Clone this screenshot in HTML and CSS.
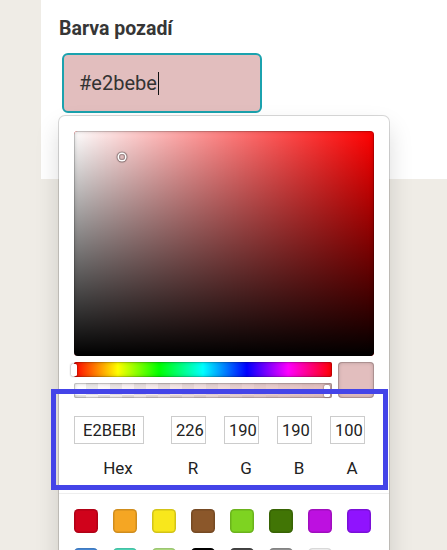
FILE: index.html
```html
<!DOCTYPE html>
<html lang="cs">
<head>
<meta charset="utf-8">
<title>Barva pozadí</title>
<link rel="stylesheet" href="styles.css">
</head>
<body>
<div class="page">
  <div class="card">
    <div class="field-label">Barva pozadí</div>
    <div class="color-field">
      <div class="color-input">#e2bebe<span class="caret"></span></div>
      <div class="picker">
        <div class="saturation">
          <div class="sat-white"></div>
          <div class="sat-black"></div>
          <div class="sat-pointer"></div>
        </div>
        <div class="controls">
          <div class="sliders">
            <div class="hue"><div class="slider-pointer hue-pointer"></div></div>
            <div class="alpha"><div class="alpha-gradient"></div><div class="slider-pointer alpha-pointer"></div></div>
          </div>
          <div class="active-color"></div>
        </div>
        <div class="fields">
          <div class="field field-hex"><input class="field-input hex-input" value="E2BEBE"><span class="field-name">Hex</span></div>
          <div class="field"><input class="field-input" value="226"><span class="field-name">R</span></div>
          <div class="field"><input class="field-input" value="190"><span class="field-name">G</span></div>
          <div class="field"><input class="field-input" value="190"><span class="field-name">B</span></div>
          <div class="field"><input class="field-input" value="100"><span class="field-name">A</span></div>
        </div>
        <div class="presets">
          <div class="swatch" style="background:#D0021B"></div>
          <div class="swatch" style="background:#F5A623"></div>
          <div class="swatch" style="background:#F8E71C"></div>
          <div class="swatch" style="background:#8B572A"></div>
          <div class="swatch" style="background:#7ED321"></div>
          <div class="swatch" style="background:#417505"></div>
          <div class="swatch" style="background:#BD10E0"></div>
          <div class="swatch" style="background:#9013FE"></div>
          <div class="swatch" style="background:#4A90E2"></div>
          <div class="swatch" style="background:#50E3C2"></div>
          <div class="swatch" style="background:#B8E986"></div>
          <div class="swatch" style="background:#000000"></div>
          <div class="swatch" style="background:#4A4A4A"></div>
          <div class="swatch" style="background:#9B9B9B"></div>
          <div class="swatch" style="background:#FFFFFF"></div>
        </div>
      </div>
    </div>
  </div>
  <div class="highlight"></div>
</div>
</body>
</html>
```
FILE: styles.css
```css
html, body {
  margin: 0;
  padding: 0;
  overflow: hidden;
  height: 100%;
}
body {
  background: #efece6;
  font-family: Roboto, "Liberation Sans", sans-serif;
  color: #333;
}
.page {
  position: relative;
  height: 550px;
}
.card {
  margin-left: 41px;
  background: #fff;
  height: 179px;
  padding: 18px 0 0 18px;
  box-sizing: border-box;
}
.field-label {
  font-size: 19.5px;
  font-weight: 700;
  color: #363636;
  line-height: 22px;
}
.color-field {
  position: relative;
  margin-top: 13px;
  margin-left: 3px;
  width: 200px;
}
.color-input {
  box-sizing: border-box;
  width: 200px;
  height: 60px;
  border: 2px solid #1ba2ae;
  border-radius: 6px;
  background: #e2bebe;
  padding-left: 15px;
  font-size: 20px;
  color: #333;
  display: flex;
  align-items: center;
}
.caret {
  display: inline-block;
  width: 1px;
  height: 23px;
  background: #111;
  margin-left: 1px;
}
.picker {
  position: absolute;
  top: 63px;
  left: -3px;
  width: 300px;
  padding: 15px 15px 0;
  background: #fff;
  border-radius: 6px;
  box-shadow: 0 0 0 1px rgba(0, 0, 0, 0.15), 0 12px 24px rgba(0, 0, 0, 0.15);
}
.saturation {
  position: relative;
  height: 225px;
  background: #f00;
  border-radius: 4px;
  overflow: hidden;
}
.sat-white {
  position: absolute;
  inset: 0;
  background: linear-gradient(to right, #fff, rgba(255, 255, 255, 0));
}
.sat-black {
  position: absolute;
  inset: 0;
  background: linear-gradient(to top, #000, rgba(0, 0, 0, 0));
  box-shadow: inset 0 0 0 1px rgba(0, 0, 0, 0.15), inset 0 0 4px rgba(0, 0, 0, 0.25);
}
.sat-pointer {
  position: absolute;
  left: 15.9%;
  top: 11.4%;
  width: 6px;
  height: 6px;
  margin: -3px 0 0 -3px;
  border-radius: 50%;
  box-shadow: 0 0 0 1.5px #fff, inset 0 0 1px 1px rgba(0, 0, 0, 0.3), 0 0 1px 2.5px rgba(0, 0, 0, 0.4);
}
.controls {
  display: flex;
  gap: 6px;
  padding-top: 6px;
}
.sliders {
  flex: 1;
  display: flex;
  flex-direction: column;
  gap: 6px;
}
.hue {
  position: relative;
  height: 15px;
  border-radius: 2px;
  background: linear-gradient(to right, #f00 0%, #ff0 17%, #0f0 33%, #0ff 50%, #00f 67%, #f0f 83%, #f00 100%);
  box-shadow: inset 0 0 0 1px rgba(0, 0, 0, 0.15), inset 0 0 4px rgba(0, 0, 0, 0.25);
}
.alpha {
  position: relative;
  height: 15px;
  border-radius: 2px;
  background-color: #fff;
  background-image: conic-gradient(#ebebeb 0 25%, #fff 0 50%, #ebebeb 0 75%, #fff 0);
  background-size: 24px 24px;
}
.alpha-gradient {
  position: absolute;
  inset: 0;
  border-radius: 2px;
  background: linear-gradient(to right, rgba(226, 190, 190, 0), rgba(226, 190, 190, 1));
  box-shadow: inset 0 0 0 1px rgba(0, 0, 0, 0.15), inset 0 0 4px rgba(0, 0, 0, 0.25);
}
.slider-pointer {
  position: absolute;
  top: 1.5px;
  width: 6px;
  height: 12px;
  border-radius: 1.5px;
  background: #fff;
  box-shadow: 0 0 2px rgba(0, 0, 0, 0.6);
}
.hue-pointer {
  left: -3px;
}
.alpha-pointer {
  right: 2px;
}
.active-color {
  width: 36px;
  height: 36px;
  border-radius: 4px;
  background: #e2bebe;
  box-shadow: inset 0 0 0 1px rgba(0, 0, 0, 0.15), inset 0 0 4px rgba(0, 0, 0, 0.25);
}
.fields {
  display: flex;
  padding: 18px 0 15px;
}
.field {
  flex: 1 1 0;
  padding-left: 9px;
  display: flex;
  flex-direction: column;
}
.field-hex {
  flex: 2 1 0;
  padding-left: 0;
}
.field-input {
  box-sizing: border-box;
  width: 80%;
  height: 28px;
  border: none;
  outline: none;
  margin: 0;
  padding: 0 0 0 5px;
  box-shadow: inset 0 0 0 1px #ccc;
  font-family: Roboto, "Liberation Sans", sans-serif;
  font-size: 16.5px;
  color: #222;
  background: #fff;
}
.hex-input {
  padding: 0 9px;
}
.field-name {
  display: block;
  text-align: center;
  font-size: 17px;
  line-height: 20px;
  margin-top: 14px;
  color: #222;
}
.presets {
  display: flex;
  flex-wrap: wrap;
  margin: 0 -15px;
  padding: 15px 0 0 15px;
  border-top: 1px solid #eee;
}
.swatch {
  width: 24px;
  height: 24px;
  margin: 0 15px 15px 0;
  border-radius: 4.5px;
  box-shadow: inset 0 0 0 1.5px rgba(0, 0, 0, 0.15);
}
.highlight {
  position: absolute;
  left: 51px;
  top: 389px;
  width: 337px;
  height: 101px;
  box-sizing: border-box;
  border: 5px solid #4444e8;
  pointer-events: none;
}
```
